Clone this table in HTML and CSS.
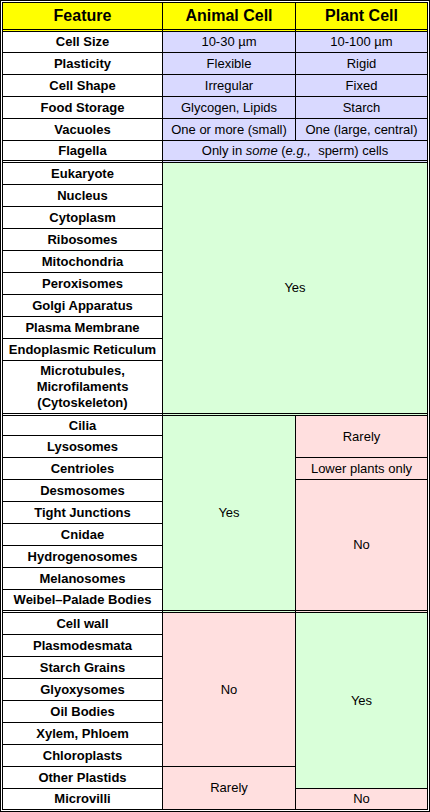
FILE: index.html
```html
<!DOCTYPE html>
<html>
<head>
<meta charset="utf-8">
<title>Animal vs Plant Cell</title>
<link rel="stylesheet" href="styles.css">
</head>
<body>
<table class="cmp">
  <thead>
    <tr class="h-head">
      <th class="c1">Feature</th>
      <th class="c2">Animal Cell</th>
      <th class="c3 e">Plant Cell</th>
    </tr>
  </thead>
  <tbody>
    <tr class="h21"><td class="f">Cell Size</td><td class="lav">10-30 µm</td><td class="lav e">10-100 µm</td></tr>
    <tr class="h22"><td class="f">Plasticity</td><td class="lav">Flexible</td><td class="lav e">Rigid</td></tr>
    <tr class="h22"><td class="f">Cell Shape</td><td class="lav">Irregular</td><td class="lav e">Fixed</td></tr>
    <tr class="h22"><td class="f">Food Storage</td><td class="lav">Glycogen, Lipids</td><td class="lav e">Starch</td></tr>
    <tr class="h22"><td class="f">Vacuoles</td><td class="lav">One or more (small)</td><td class="lav e">One (large, central)</td></tr>
    <tr class="h22"><td class="f g">Flagella</td><td class="lav e g" colspan="2">Only in <i>some</i> (<i>e.g.,</i>&nbsp; sperm) cells</td></tr>

    <tr class="h22"><td class="f">Eukaryote</td><td class="grn e g" colspan="2" rowspan="10">Yes</td></tr>
    <tr class="h22"><td class="f">Nucleus</td></tr>
    <tr class="h22"><td class="f">Cytoplasm</td></tr>
    <tr class="h22"><td class="f">Ribosomes</td></tr>
    <tr class="h22"><td class="f">Mitochondria</td></tr>
    <tr class="h22"><td class="f">Peroxisomes</td></tr>
    <tr class="h22"><td class="f">Golgi Apparatus</td></tr>
    <tr class="h22"><td class="f">Plasma Membrane</td></tr>
    <tr class="h22"><td class="f">Endoplasmic Reticulum</td></tr>
    <tr class="h55"><td class="f g">Microtubules,<br>Microfilaments<br>(Cytoskeleton)</td></tr>

    <tr class="h20"><td class="f">Cilia</td><td class="grn g" rowspan="9">Yes</td><td class="pnk e" rowspan="2">Rarely</td></tr>
    <tr class="h22"><td class="f">Lysosomes</td></tr>
    <tr class="h22"><td class="f">Centrioles</td><td class="pnk e">Lower plants only</td></tr>
    <tr class="h22"><td class="f">Desmosomes</td><td class="pnk e g" rowspan="6">No</td></tr>
    <tr class="h22"><td class="f">Tight Junctions</td></tr>
    <tr class="h22"><td class="f">Cnidae</td></tr>
    <tr class="h22"><td class="f">Hydrogenosomes</td></tr>
    <tr class="h22"><td class="f">Melanosomes</td></tr>
    <tr class="h23"><td class="f g">Weibel–Palade Bodies</td></tr>

    <tr class="h22"><td class="f">Cell wall</td><td class="pnk" rowspan="7">No</td><td class="grn e" rowspan="8">Yes</td></tr>
    <tr class="h22"><td class="f">Plasmodesmata</td></tr>
    <tr class="h22"><td class="f">Starch Grains</td></tr>
    <tr class="h22"><td class="f">Glyoxysomes</td></tr>
    <tr class="h22"><td class="f">Oil Bodies</td></tr>
    <tr class="h22"><td class="f">Xylem, Phloem</td></tr>
    <tr class="h22"><td class="f">Chloroplasts</td></tr>
    <tr class="h22"><td class="f">Other Plastids</td><td class="pnk z" rowspan="2">Rarely</td></tr>
    <tr class="h20"><td class="f z">Microvilli</td><td class="pnk e z">No</td></tr>
  </tbody>
</table>
</body>
</html>
```
FILE: styles.css
```css
html, body {
  margin: 0;
  padding: 0;
  background: #ffffff;
}

.cmp {
  width: 430px;
  border: 3px double #000000;
  border-collapse: separate;
  border-spacing: 0;
  table-layout: fixed;
  font-family: "Liberation Sans", Arial, sans-serif;
  color: #000000;
}

.cmp th,
.cmp td {
  box-sizing: border-box;
  padding: 0 2px;
  text-align: center;
  vertical-align: middle;
  border-right: 1px solid #000000;
  border-bottom: 1px solid #000000;
  white-space: nowrap;
}

.cmp th {
  background: #ffff00;
  font-size: 16px;
  font-weight: bold;
  line-height: 18px;
  border-bottom: 3px double #000000;
}

.c1 { width: 160px; }
.c2 { width: 133px; }

.h-head { height: 29px; }
.h20 { height: 20px; }
.h21 { height: 21px; }
.h22 { height: 22px; }
.h23 { height: 23px; }
.h55 { height: 55px; }

.cmp td {
  font-size: 13px;
  line-height: 16px;
}

.cmp td.f {
  background: #ffffff;
  font-weight: bold;
}

.cmp .e { border-right: 0; }
.cmp .g { border-bottom: 3px double #000000; }
.cmp .z { border-bottom: 0; }

.lav { background: #d9d9ff; }
.grn { background: #d9ffd9; }
.pnk { background: #ffdfdf; }
```
